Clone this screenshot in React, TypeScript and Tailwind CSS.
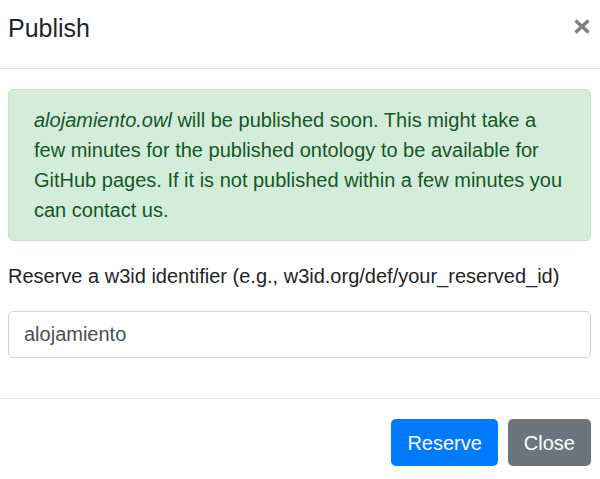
export default function App() {
  return (
    <div
      className="w-[600px] h-[479px] overflow-hidden bg-white text-[#212529] text-[20px] leading-[30px]"
      style={{ fontFamily: '"Liberation Sans", Arial, sans-serif' }}
    >
      <div className="flex h-[69px] items-start justify-between border-b border-[#dee2e6] pl-2 pr-[9px] pt-[10px]">
        <h5 className="text-[25px] leading-[37.5px] font-normal">Publish</h5>
        <button aria-label="Close" className="mt-[9px] mr-[1px] opacity-50">
          <svg width="16" height="15" viewBox="0 0 16 15">
            <path d="M1.5 1.5 L14.5 13.5 M14.5 1.5 L1.5 13.5" stroke="#000" strokeWidth="3.4" />
          </svg>
        </button>
      </div>

      <div className="pl-2 pr-[9px] pt-5 pb-5">
        <div className="mb-5 rounded-[5px] border border-[#c3e6cb] bg-[#d4edda] px-[25px] py-[15px] text-[#155724]">
          <em>alojamiento.owl</em> will be published soon. This might take a few minutes for the
          published ontology to be available for GitHub pages. If it is not published within a few
          minutes you can contact us.
        </div>
        <p className="mb-5">Reserve a w3id identifier (e.g., w3id.org/def/your_reserved_id)</p>
        <div className="mb-5">
          <input
            className="block h-[47px] w-full rounded-[5px] border border-[#ced4da] px-[15px] text-[20px] text-[#495057] outline-none"
            defaultValue="alojamiento"
          />
        </div>
      </div>

      <div className="flex justify-end gap-[10px] border-t border-[#dee2e6] pl-2 pr-[9px] pt-5">
        <button className="h-[47px] rounded-[5px] bg-[#007bff] px-4 text-white">Reserve</button>
        <button className="h-[47px] rounded-[5px] bg-[#6c757d] px-4 text-white">Close</button>
      </div>
    </div>
  );
}
